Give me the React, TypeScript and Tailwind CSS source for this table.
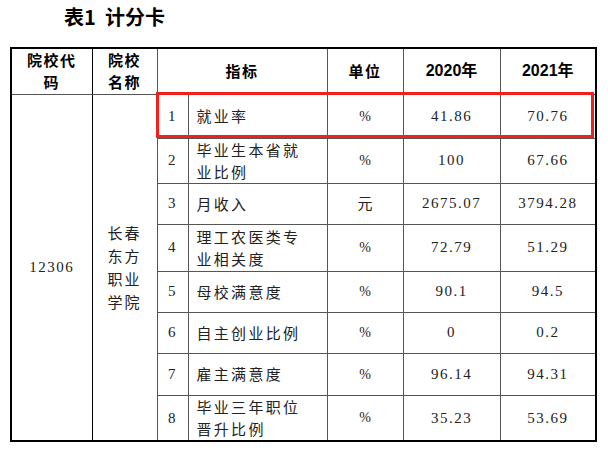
import React from "react";

type Row = {
  no: number;
  name: string[];
  unit: string;
  y2020: string;
  y2021: string;
  h: string;
};

const rows: Row[] = [
  { no: 1, name: ["就业率"], unit: "%", y2020: "41.86", y2021: "70.76", h: "h-[44px]" },
  { no: 2, name: ["毕业生本省就", "业比例"], unit: "%", y2020: "100", y2021: "67.66", h: "h-[45px]" },
  { no: 3, name: ["月收入"], unit: "元", y2020: "2675.07", y2021: "3794.28", h: "h-[41px]" },
  { no: 4, name: ["理工农医类专", "业相关度"], unit: "%", y2020: "72.79", y2021: "51.29", h: "h-[47px]" },
  { no: 5, name: ["母校满意度"], unit: "%", y2020: "90.1", y2021: "94.5", h: "h-[41px]" },
  { no: 6, name: ["自主创业比例"], unit: "%", y2020: "0", y2021: "0.2", h: "h-[41px]" },
  { no: 7, name: ["雇主满意度"], unit: "%", y2020: "96.14", y2021: "94.31", h: "h-[42px]" },
  { no: 8, name: ["毕业三年职位", "晋升比例"], unit: "%", y2020: "35.23", y2021: "53.69", h: "h-[46px]" },
];

const cjk = "font-['Noto_Sans_CJK_SC',sans-serif]";
const num = "font-['Liberation_Serif','Noto_Sans_CJK_SC',serif] tracking-[1.5px]";
const cell = "border border-[#555] p-0 align-middle";

export default function App() {
  return (
    <div className="relative w-[608px] h-[451px] bg-white text-[#222]">
      <div className="h-[47px] pl-[64px] pt-[3px]">
        <h1 className={`${cjk} text-[20px] leading-[28px] font-bold text-black`}>表1&nbsp;&nbsp;计分卡</h1>
      </div>

      <table className="ml-[10px] w-[585px] table-fixed border-collapse border-2 border-black">
        <colgroup>
          <col className="w-[81px]" />
          <col className="w-[65px]" />
          <col className="w-[31px]" />
          <col className="w-[139px]" />
          <col className="w-[76px]" />
          <col className="w-[97px]" />
          <col className="w-[96px]" />
        </colgroup>
        <thead>
          <tr className={`h-[46px] ${cjk} text-[15px] leading-[22px] font-bold text-black tracking-[1.5px]`}>
            <th className={`${cell} border-r-black`}>
              院校代
              <br />码
            </th>
            <th className={cell}>
              院校
              <br />
              名称
            </th>
            <th colSpan={2} className={cell}>
              指标
            </th>
            <th className={cell}>单位</th>
            <th className={`${cell} text-[16px] tracking-normal font-['Liberation_Sans','Noto_Sans_CJK_SC',sans-serif]`}>2020年</th>
            <th className={`${cell} text-[16px] tracking-normal font-['Liberation_Sans','Noto_Sans_CJK_SC',sans-serif]`}>2021年</th>
          </tr>
        </thead>
        <tbody>
          {rows.map((r, i) => (
            <tr key={r.no} className={r.h}>
              {i === 0 && (
                <>
                  <td rowSpan={8} className={`${cell} border-r-black text-center text-[15px] ${num}`}>
                    12306
                  </td>
                  <td rowSpan={8} className={`${cell} text-center ${cjk} text-[15px] leading-[23px] tracking-[2px]`}>
                    长春
                    <br />
                    东方
                    <br />
                    职业
                    <br />
                    学院
                  </td>
                </>
              )}
              <td className={`${cell} text-center text-[15px] ${num}`}>{r.no}</td>
              <td className={`${cell} pl-[8px] ${cjk} text-[15px] leading-[22px] tracking-[2.3px]`}>
                {r.name.map((n) => (
                  <div key={n}>{n}</div>
                ))}
              </td>
              <td
                className={`${cell} text-center ${
                  r.unit === "%" ? "font-['Liberation_Serif',serif] text-[14px]" : `${cjk} text-[15px]`
                }`}
              >
                {r.unit}
              </td>
              <td className={`${cell} text-center text-[15px] ${num}`}>{r.y2020}</td>
              <td className={`${cell} text-center text-[15px] ${num}`}>{r.y2021}</td>
            </tr>
          ))}
        </tbody>
      </table>

      <div className="absolute left-[156px] top-[92px] w-[438px] h-[46px] border-[3px] border-[#f0201a]" />
    </div>
  );
}
